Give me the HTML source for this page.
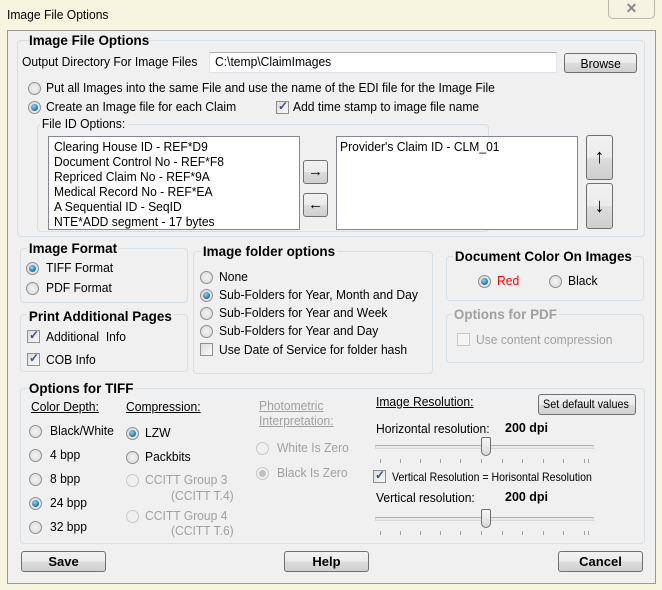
<!DOCTYPE html>
<html><head><meta charset="utf-8"><style>
*{margin:0;padding:0;box-sizing:border-box}
body{width:662px;height:590px;background:#f7f5df;position:relative;overflow:hidden;font-family:"Liberation Sans",sans-serif;font-size:13px;color:#000}
.a{position:absolute;white-space:nowrap;line-height:14px;transform:scaleX(.93);transform-origin:0 0}
.b{position:absolute;white-space:nowrap;line-height:14px;font-weight:bold;font-size:14px;transform:scaleX(.96);transform-origin:0 0}
.g{color:#a0a0a0}
.u{text-decoration:underline}
.box{position:absolute;border:1px solid #d5dfe5;border-radius:4px}
.ttl{position:absolute;background:#f0f0f0;padding:0 2px}
.btn{position:absolute;border:1px solid #707070;border-radius:3px;background:linear-gradient(#f2f2f2 0,#ebebeb 50%,#dddddd 51%,#cfcfcf 100%);text-align:center;line-height:18px;font-size:13px}
.r{position:absolute;width:13px;height:13px;border-radius:50%;border:1px solid #8e8f8f;background:radial-gradient(circle at 50% 50%,#f4f4f4,#d6d6d6)}
.r.c::after{content:"";position:absolute;left:2px;top:2px;width:7px;height:7px;border-radius:50%;background:radial-gradient(circle at 40% 35%,#8fd6f7,#1a6ea6 70%)}
.r.d{border-color:#c8c8c8;background:#f0f0f0}
.r.d.c::after{background:#c0c0c0}
.k{position:absolute;width:13px;height:13px;border:1px solid #8e8f8f;background:linear-gradient(135deg,#dcdcdc,#fafafa)}
.k.c::after{content:"✓";position:absolute;left:1px;top:-3px;font-size:12px;font-weight:bold;color:#3b4f8a}
.k.d{border-color:#c8c8c8;background:#f4f4f4}
.lst{position:absolute;background:#fff;border:1px solid #828790}
.track{position:absolute;height:4px;border:1px solid #d6d6d6;border-top-color:#b0b0b0;background:#e7eaea}
.thumb{position:absolute;width:10px;height:19px;border:1px solid #707070;border-radius:2px 2px 5px 5px;background:linear-gradient(#f6f6f6,#dadada)}
.tk{position:absolute;width:1px;height:4px;background:#a0a0a0}
.bl{position:relative;display:inline-block;line-height:19px;transform-origin:50% 0}
</style></head><body>
<div class="a" style="left:7px;top:8px">Image File Options</div>
<div style="position:absolute;left:608px;top:-2px;width:47px;height:21px;border:1px solid #b8b8a8;border-radius:0 0 5px 5px;background:#f5f3e2;text-align:center;color:#888;font-weight:bold;font-size:14px;line-height:19px">✕</div>
<div style="position:absolute;left:7px;top:30px;width:649px;height:554px;background:#f0f0f0;border:1px solid #9a9a90"></div>

<div class="box" style="left:17px;top:40px;width:628px;height:197px"></div>
<div class="b" style="left:29px;top:33px">Image File Options</div>
<div class="a" style="left:22px;top:55px">Output Directory For Image Files</div>
<div style="position:absolute;left:209px;top:52px;width:348px;height:21px;background:#fff;border:1px solid #e2e3ea;border-top-color:#abadb3"></div>
<div class="a" style="left:215px;top:55px">C:\temp\ClaimImages</div>
<div class="btn" style="left:564px;top:53px;width:73px;height:20px"><span class="a bl">Browse</span></div>
<div class="r" style="left:28px;top:82px"></div>
<div class="a" style="left:46px;top:81px">Put all Images into the same File and use the name of the EDI file for the Image File</div>
<div class="r c" style="left:28px;top:101px"></div>
<div class="a" style="left:46px;top:100px">Create an Image file for each Claim</div>
<div class="k c" style="left:276px;top:101px"></div>
<div class="a" style="left:293px;top:100px">Add time stamp to image file name</div>
<div class="box" style="left:37px;top:124px;width:452px;height:108px"></div>
<div class="ttl a" style="left:40px;top:117px">File ID Options:</div>
<div class="lst" style="left:48px;top:136px;width:252px;height:94px"></div>
<div class="a" style="left:54px;top:140px">Clearing House ID - REF*D9</div>
<div class="a" style="left:54px;top:155px">Document Control No - REF*F8</div>
<div class="a" style="left:54px;top:170px">Repriced Claim No - REF*9A</div>
<div class="a" style="left:54px;top:185px">Medical Record No - REF*EA</div>
<div class="a" style="left:54px;top:200px">A Sequential ID - SeqID</div>
<div class="a" style="left:54px;top:215px">NTE*ADD segment - 17 bytes</div>
<div class="btn" style="left:303px;top:160px;width:25px;height:24px;line-height:22px;font-size:15px">→</div>
<div class="btn" style="left:303px;top:193px;width:25px;height:24px;line-height:22px;font-size:15px">←</div>
<div class="lst" style="left:336px;top:136px;width:242px;height:94px"></div>
<div class="a" style="left:340px;top:140px">Provider's Claim ID - CLM_01</div>
<div class="btn" style="left:586px;top:135px;width:27px;height:45px;line-height:43px;font-size:20px">↑</div>
<div class="btn" style="left:586px;top:183px;width:27px;height:46px;line-height:44px;font-size:20px">↓</div>

<div class="box" style="left:20px;top:248px;width:168px;height:55px"></div>
<div class="ttl b" style="left:27px;top:241px">Image Format</div>
<div class="r c" style="left:26px;top:262px"></div>
<div class="a" style="left:46px;top:261px">TIFF Format</div>
<div class="r" style="left:26px;top:282px"></div>
<div class="a" style="left:46px;top:281px">PDF Format</div>

<div class="box" style="left:20px;top:314px;width:168px;height:58px"></div>
<div class="ttl b" style="left:27px;top:309px">Print Additional Pages</div>
<div class="k c" style="left:27px;top:330px"></div>
<div class="a" style="left:46px;top:330px">Additional&nbsp; Info</div>
<div class="k c" style="left:27px;top:353px"></div>
<div class="a" style="left:46px;top:353px">COB Info</div>

<div class="box" style="left:193px;top:251px;width:240px;height:123px"></div>
<div class="ttl b" style="left:201px;top:244px">Image folder options</div>
<div class="r" style="left:200px;top:271px"></div><div class="a" style="left:219px;top:270px">None</div>
<div class="r c" style="left:200px;top:289px"></div><div class="a" style="left:219px;top:288px">Sub-Folders for Year, Month and Day</div>
<div class="r" style="left:200px;top:307px"></div><div class="a" style="left:219px;top:306px">Sub-Folders for Year and Week</div>
<div class="r" style="left:200px;top:325px"></div><div class="a" style="left:219px;top:324px">Sub-Folders for Year and Day</div>
<div class="k" style="left:200px;top:343px"></div><div class="a" style="left:219px;top:343px">Use Date of Service for folder hash</div>

<div class="box" style="left:446px;top:256px;width:198px;height:45px"></div>
<div class="ttl b" style="left:453px;top:249px">Document Color On Images</div>
<div class="r c" style="left:478px;top:275px"></div><div class="a" style="left:497px;top:274px;color:#f00">Red</div>
<div class="r" style="left:549px;top:275px"></div><div class="a" style="left:568px;top:274px">Black</div>

<div class="box" style="left:446px;top:314px;width:198px;height:49px"></div>
<div class="ttl b g" style="left:452px;top:307px">Options for PDF</div>
<div class="k d" style="left:457px;top:333px"></div><div class="a g" style="left:476px;top:333px">Use content compression</div>

<div class="box" style="left:20px;top:388px;width:625px;height:156px"></div>
<div class="ttl b" style="left:27px;top:381px">Options for TIFF</div>
<div class="a u" style="left:31px;top:400px">Color Depth:</div>
<div class="r" style="left:29px;top:425px"></div><div class="a" style="left:50px;top:424px">Black/White</div>
<div class="r" style="left:29px;top:449px"></div><div class="a" style="left:50px;top:448px">4 bpp</div>
<div class="r" style="left:29px;top:473px"></div><div class="a" style="left:50px;top:472px">8 bpp</div>
<div class="r c" style="left:29px;top:497px"></div><div class="a" style="left:50px;top:496px">24 bpp</div>
<div class="r" style="left:29px;top:521px"></div><div class="a" style="left:50px;top:520px">32 bpp</div>
<div class="a u" style="left:126px;top:400px">Compression:</div>
<div class="r c" style="left:126px;top:427px"></div><div class="a" style="left:145px;top:426px">LZW</div>
<div class="r" style="left:126px;top:451px"></div><div class="a" style="left:145px;top:450px">Packbits</div>
<div class="r d" style="left:126px;top:474px"></div><div class="a g" style="left:145px;top:473px">CCITT Group 3</div>
<div class="a g" style="left:171px;top:489px">(CCITT T.4)</div>
<div class="r d" style="left:126px;top:510px"></div><div class="a g" style="left:145px;top:509px">CCITT Group 4</div>
<div class="a g" style="left:171px;top:524px">(CCITT T.6)</div>
<div class="a g u" style="left:259px;top:399px">Photometric</div>
<div class="a g u" style="left:259px;top:414px">Interpretation:</div>
<div class="r d" style="left:256px;top:442px"></div><div class="a g" style="left:277px;top:441px">White Is Zero</div>
<div class="r d c" style="left:256px;top:467px"></div><div class="a g" style="left:277px;top:466px">Black Is Zero</div>
<div class="a u" style="left:376px;top:395px">Image Resolution:</div>
<div class="btn" style="left:538px;top:394px;width:98px;height:21px"></div>
<div class="a" style="left:543px;top:397px;font-size:12px;transform:scaleX(.9)">Set default values</div>
<div class="a" style="left:376px;top:422px">Horizontal resolution:</div>
<div class="b" style="left:505px;top:421px;font-size:13px">200 dpi</div>
<div class="track" style="left:375px;top:445px;width:219px"></div>
<div class="thumb" style="left:481px;top:437px"></div>
<div class="k c" style="left:373px;top:470px"></div>
<div class="a" style="left:392px;top:470px;font-size:12px;transform:scaleX(.88)">Vertical Resolution = Horisontal Resolution</div>
<div class="a" style="left:376px;top:491px">Vertical resolution:</div>
<div class="b" style="left:505px;top:490px;font-size:13px">200 dpi</div>
<div class="track" style="left:375px;top:517px;width:219px"></div>
<div class="thumb" style="left:481px;top:509px"></div>

<div class="btn" style="left:21px;top:551px;width:85px;height:21px;font-weight:bold"><span class="a bl" style="transform:none">Save</span></div>
<div class="btn" style="left:284px;top:551px;width:85px;height:21px;font-weight:bold"><span class="a bl" style="transform:none">Help</span></div>
<div class="btn" style="left:558px;top:551px;width:85px;height:21px;font-weight:bold"><span class="a bl" style="transform:none">Cancel</span></div>

<div class="tk" style="left:380px;top:459px"></div><div class="tk" style="left:400px;top:459px"></div><div class="tk" style="left:420px;top:459px"></div><div class="tk" style="left:440px;top:459px"></div><div class="tk" style="left:460px;top:459px"></div><div class="tk" style="left:481px;top:459px"></div><div class="tk" style="left:502px;top:459px"></div><div class="tk" style="left:522px;top:459px"></div><div class="tk" style="left:543px;top:459px"></div><div class="tk" style="left:563px;top:459px"></div><div class="tk" style="left:584px;top:459px"></div><div class="tk" style="left:588px;top:459px"></div>
<div class="tk" style="left:380px;top:531px"></div><div class="tk" style="left:400px;top:531px"></div><div class="tk" style="left:420px;top:531px"></div><div class="tk" style="left:440px;top:531px"></div><div class="tk" style="left:460px;top:531px"></div><div class="tk" style="left:481px;top:531px"></div><div class="tk" style="left:502px;top:531px"></div><div class="tk" style="left:522px;top:531px"></div><div class="tk" style="left:543px;top:531px"></div><div class="tk" style="left:563px;top:531px"></div><div class="tk" style="left:584px;top:531px"></div><div class="tk" style="left:588px;top:531px"></div>
</body></html>
